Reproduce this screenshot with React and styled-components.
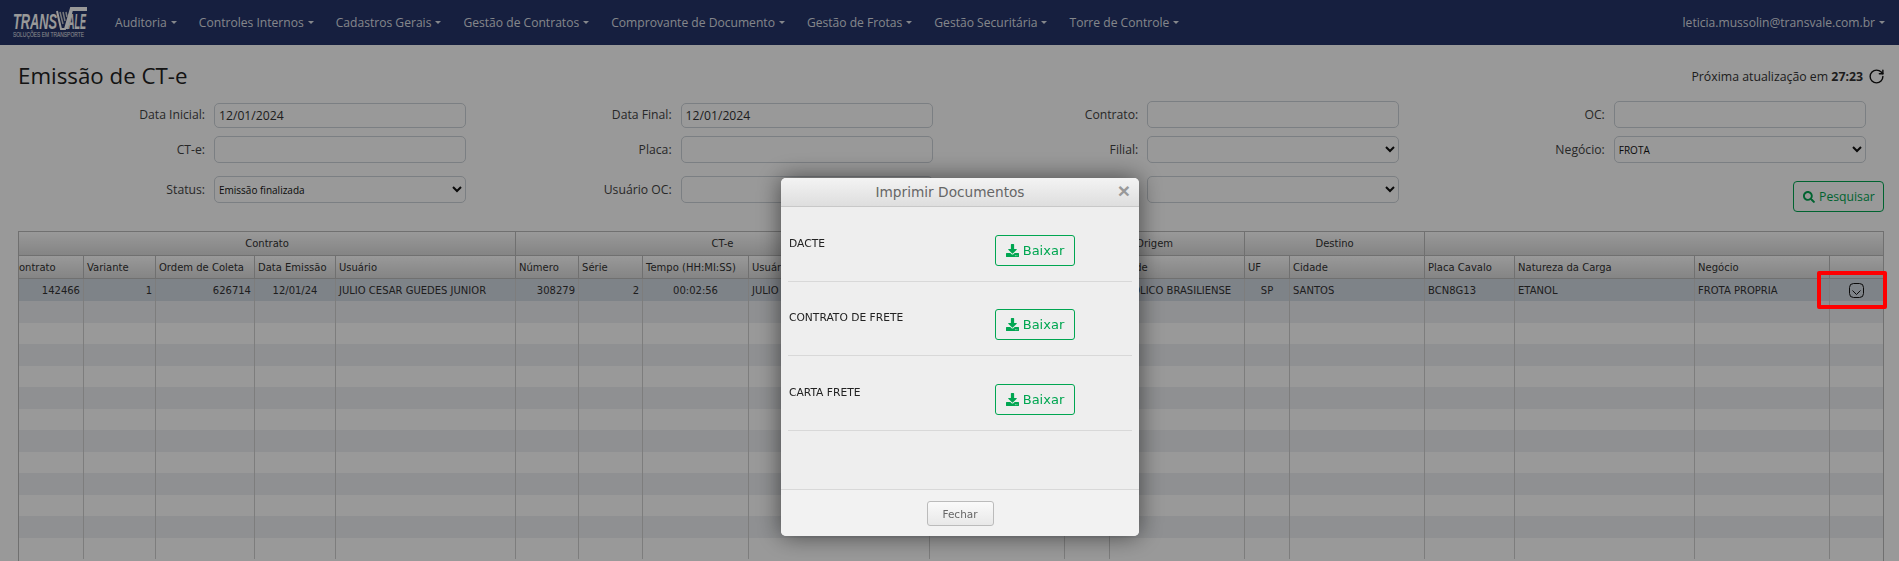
import React from "react";
import styled, { createGlobalStyle } from "styled-components";
import { FaDownload, FaSearch } from "react-icons/fa";
import { RotateCw } from "lucide-react";

const Global = createGlobalStyle`
  html, body { margin: 0; padding: 0; height: 100%; overflow: hidden; background: #fff; }
  body { font-family: "Open Sans", "Liberation Sans", sans-serif; color: #333; }
  * { box-sizing: border-box; }
`;

const Navbar = styled.nav`
  height: 45px;
  background: #253569;
  display: flex;
  align-items: center;
  padding: 0 14px 0 13px;
`;
const LogoBox = styled.div`
  width: 74px;
  height: 32px;
  margin-right: 28px;
  flex: none;
  svg { overflow: visible; display: block; }
`;
const Menu = styled.ul`
  display: flex;
  list-style: none;
  margin: 0;
  padding: 0;
  flex: 1;
`;
const MenuItem = styled.li`
  font-size: 12.1px;
  color: rgba(255, 255, 255, 0.85);
  white-space: nowrap;
  margin-right: ${(p) => p.$gap ?? 22}px;
  display: flex;
  align-items: center;
  &::after {
    content: "";
    margin-left: 4px;
    border-top: 3px solid currentColor;
    border-left: 3px solid transparent;
    border-right: 3px solid transparent;
  }
`;
const UserItem = styled(MenuItem)`
  margin-right: 0;
`;

const Content = styled.main`
  padding: 0 14px 0 18px;
`;
const TitleRow = styled.div`
  display: flex;
  justify-content: space-between;
  align-items: center;
  height: 56px;
`;
const Title = styled.h1`
  margin: 4px 0 0;
  font-size: 22.3px;
  font-weight: 500;
  color: #222;
`;
const Refresh = styled.div`
  display: flex;
  align-items: center;
  gap: 5px;
  font-size: 12.3px;
  color: #333;
  margin-top: 7px;
  b { font-weight: 700; }
`;

const Filters = styled.section`
  display: grid;
  grid-template-columns: repeat(4, 466.6px);
  grid-template-rows: 35px 40px 36px;
  width: 1867px;
`;
const Field = styled.div`
  display: grid;
  grid-template-columns: 187px 252px;
  column-gap: 9px;
  align-items: center;
  height: 27px;
`;
const FieldLabel = styled.label`
  text-align: right;
  font-size: 12.2px;
  color: #444;
`;
const TextInput = styled.input`
  width: 252px;
  height: ${(p) => (p.$short ? 25 : 27)}px;
  margin-top: ${(p) => (p.$short ? 2 : 0)}px;
  border: 1px solid #ced4da;
  border-radius: 5px;
  background: #fff;
  padding: 0 4px;
  font: 12.2px "Open Sans", sans-serif;
  color: #333;
`;
const SelectInput = styled.select`
  width: 252px;
  height: 27px;
  border: 1px solid #ced4da;
  border-radius: 5px;
  background: #fff;
  padding: 0;
  font: 10px "Open Sans", sans-serif;
  color: #111;
`;
const SearchCell = styled.div`
  display: flex;
  justify-content: flex-end;
  padding-top: 5px;
`;
const SearchButton = styled.button`
  width: 91px;
  height: 31px;
  display: inline-flex;
  align-items: center;
  justify-content: center;
  gap: 4px;
  border: 1px solid #00a651;
  border-radius: 4px;
  background: #fff;
  color: #00a651;
  font: 12.2px "Open Sans", sans-serif;
  padding: 0;
`;

const TableWrap = styled.div`
  margin-top: 19px;
  width: 1866px;
  height: 340px;
  overflow: hidden;
  border: 1px solid #bbb;
`;
const Table = styled.table`
  table-layout: fixed;
  width: 1865px;
  border-collapse: separate;
  border-spacing: 0;
  font: 10px "DejaVu Sans", Verdana, sans-serif;
  color: #333;
`;
const GroupCell = styled.th`
  height: 24px;
  font-weight: 400;
  text-align: center;
  padding: 0;
  background: linear-gradient(#fff, #ddd);
  border-right: 1px solid #bbb;
  border-bottom: 1px solid #bbb;
`;
const HeadCell = styled.th`
  height: 23px;
  font-weight: 400;
  text-align: left;
  padding: 0 3px;
  white-space: nowrap;
  overflow: hidden;
  background: linear-gradient(#fff, #ddd);
  border-right: 1px solid #bbb;
  border-bottom: 1px solid #bbb;
  span { display: block; margin-left: ${(p) => (p.$clip ? -10 : 0)}px; }
`;
const BodyRow = styled.tr`
  height: ${(p) => (p.$selected ? 22 : 21.5)}px;
  background: ${(p) => (p.$selected ? "#d3dae3" : p.$alt ? "#eef0f3" : "#fff")};
`;
const BodyCell = styled.td`
  padding: 0 3px;
  text-align: ${(p) => p.$align || "left"};
  white-space: nowrap;
  overflow: hidden;
  border-right: 1px solid #d0d0d0;
`;
const ActionIcon = styled.svg`
  display: block;
  margin: 0 0 0 16px;
`;

const Backdrop = styled.div`
  position: fixed;
  inset: 0;
  background: rgba(0, 0, 0, 0.4);
`;
const Modal = styled.div`
  position: fixed;
  left: 781px;
  top: 178px;
  width: 358px;
  height: 358px;
  border-radius: 5px;
  background: #eee;
  box-shadow: 0 0 24px rgba(0, 0, 0, 0.55);
  display: flex;
  flex-direction: column;
  font-family: "DejaVu Sans", Verdana, sans-serif;
  overflow: hidden;
`;
const ModalHeader = styled.header`
  height: 29px;
  flex: none;
  position: relative;
  display: flex;
  align-items: center;
  justify-content: center;
  padding-right: 20px;
  background: linear-gradient(#f3f3f3, #dedede);
  border-bottom: 1px solid #c8c8c8;
  color: #666;
  font-size: 13.7px;
`;
const CloseMark = styled.span`
  position: absolute;
  right: 9px;
  top: 0;
  color: #999;
  font: 700 21px/26px "Liberation Sans", sans-serif;
`;
const ModalBody = styled.div`
  flex: 1;
  padding: 0 7px;
`;
const DocRow = styled.div`
  height: ${(p) => (p.$top === 27 ? 74 : 75)}px;
  padding-top: ${(p) => p.$top}px;
  padding-left: 1px;
  display: grid;
  grid-template-columns: 206px 80px;
  border-bottom: 1px solid #d8d8d8;
`;
const DocName = styled.span`
  font-size: 10.7px;
  color: #222;
  line-height: 18px;
`;
const DownloadButton = styled.button`
  width: 80px;
  height: 31px;
  display: inline-flex;
  align-items: center;
  justify-content: center;
  gap: 4px;
  border: 1px solid #00a651;
  border-radius: 3px;
  background: #eee;
  color: #00a651;
  font: 13px "DejaVu Sans", Verdana, sans-serif;
  padding: 0;
`;
const ModalFooter = styled.footer`
  height: 47px;
  flex: none;
  background: #f2f2f2;
  border-top: 1px solid #d8d8d8;
  display: flex;
  justify-content: center;
  padding-top: 11px;
`;
const CloseButton = styled.button`
  width: 67px;
  height: 25px;
  border: 1px solid #bbb;
  border-radius: 3px;
  background: linear-gradient(#fafafa, #e8e8e8);
  color: #666;
  font: 10.5px "DejaVu Sans", Verdana, sans-serif;
  padding: 0;
`;
const Annotation = styled.div`
  position: fixed;
  left: 1817px;
  top: 271px;
  width: 70px;
  height: 38px;
  border: 4px solid #f00;
  border-radius: 2px;
`;

const Logo = () => (
  <svg width="74" height="32" viewBox="0 0 74 32">
    <text x="0" y="22" fontFamily="Liberation Sans" fontWeight="700" fontStyle="italic" fontSize="22" fill="#fff" textLength="44" lengthAdjust="spacingAndGlyphs">TRANS</text>
    <path d="M44 4 L48 22 L52 22 L58 1 L73 1 L73 3 L59 3 L54 22" fill="none" stroke="#fff" strokeWidth="2" />
    <path d="M47 5 L50 17 M50 5 L52 14 M53 5 L54 10" stroke="#c8c8cc" strokeWidth="1.5" />
    <text x="55" y="22" fontFamily="Liberation Sans" fontWeight="700" fontStyle="italic" fontSize="22" fill="#fff" textLength="18" lengthAdjust="spacingAndGlyphs">ALE</text>
    <text x="0" y="30" fontFamily="Liberation Sans" fontSize="6.5" fill="#e8e8ee" textLength="71" lengthAdjust="spacingAndGlyphs">SOLUÇÕES EM TRANSPORTE</text>
  </svg>
);

const menu = [
  ["Auditoria", 22],
  ["Controles Internos", 22],
  ["Cadastros Gerais", 22],
  ["Gestão de Contratos", 22],
  ["Comprovante de Documento", 22],
  ["Gestão de Frotas", 22],
  ["Gestão Securitária", 22],
  ["Torre de Controle", 0],
];

const widths = [65, 72, 99, 81, 180, 63, 64, 106, 181, 135, 45, 135, 45, 135, 90, 180, 135, 54];
const groups = [
  ["Contrato", 5],
  ["CT-e", 4],
  ["", 1],
  ["Origem", 2],
  ["Destino", 2],
  ["", 4],
];
const heads = ["Contrato", "Variante", "Ordem de Coleta", "Data Emissão", "Usuário", "Número", "Série", "Tempo (HH:MI:SS)", "Usuário", "", "UF", "Cidade", "UF", "Cidade", "Placa Cavalo", "Natureza da Carga", "Negócio", ""];
const row = [
  ["142466", "right"], ["1", "right"], ["626714", "right"], ["12/01/24", "center"],
  ["JULIO CESAR GUEDES JUNIOR"], ["308279", "right"], ["2", "right"], ["00:02:56", "center"],
  ["JULIO CESAR GUEDES JUNIOR"], [""], ["DF", "center"], ["CATOLICO BRASILIENSE"],
  ["SP", "center"], ["SANTOS"], ["BCN8G13"], ["ETANOL"], ["FROTA PROPRIA"],
];
const docs = [["DACTE", 28], ["CONTRATO DE FRETE", 27], ["CARTA FRETE", 28]];

export default function App() {
  return (
    <>
      <Global />
      <Navbar>
        <LogoBox><Logo /></LogoBox>
        <Menu>
          {menu.map(([t, g]) => <MenuItem key={t} $gap={g}>{t}</MenuItem>)}
        </Menu>
        <UserItem as="div">leticia.mussolin@transvale.com.br</UserItem>
      </Navbar>
      <Content>
        <TitleRow>
          <Title>Emissão de CT-e</Title>
          <Refresh>
            <span>Próxima atualização em <b>27:23</b></span>
            <RotateCw size={17} strokeWidth={2} color="#111" />
          </Refresh>
        </TitleRow>
        <Filters>
          <Field><FieldLabel>Data Inicial:</FieldLabel><TextInput $short defaultValue="12/01/2024" /></Field>
          <Field><FieldLabel>Data Final:</FieldLabel><TextInput $short defaultValue="12/01/2024" /></Field>
          <Field><FieldLabel>Contrato:</FieldLabel><TextInput /></Field>
          <Field><FieldLabel>OC:</FieldLabel><TextInput /></Field>
          <Field><FieldLabel>CT-e:</FieldLabel><TextInput /></Field>
          <Field><FieldLabel>Placa:</FieldLabel><TextInput /></Field>
          <Field><FieldLabel>Filial:</FieldLabel><SelectInput><option></option></SelectInput></Field>
          <Field><FieldLabel>Negócio:</FieldLabel><SelectInput defaultValue="FROTA"><option>FROTA</option></SelectInput></Field>
          <Field><FieldLabel>Status:</FieldLabel><SelectInput defaultValue="Emissão finalizada"><option>Emissão finalizada</option></SelectInput></Field>
          <Field><FieldLabel>Usuário OC:</FieldLabel><TextInput /></Field>
          <Field><FieldLabel>Tipo:</FieldLabel><SelectInput><option></option></SelectInput></Field>
          <SearchCell><SearchButton><FaSearch size={12} />Pesquisar</SearchButton></SearchCell>
        </Filters>
        <TableWrap>
          <Table>
            <colgroup>{widths.map((w, i) => <col key={i} width={w} />)}</colgroup>
            <thead>
              <tr>{groups.map(([t, s], i) => <GroupCell key={i} colSpan={s}>{t}</GroupCell>)}</tr>
              <tr>{heads.map((t, i) => <HeadCell key={i} $clip={i === 0}><span>{t}</span></HeadCell>)}</tr>
            </thead>
            <tbody>
              <BodyRow $selected>
                {row.map(([t, a], i) => <BodyCell key={i} $align={a}>{t}</BodyCell>)}
                <BodyCell>
                  <ActionIcon width="15" height="15" viewBox="0 0 15 15" fill="none" stroke="#111">
                    <rect x="0.5" y="0.5" width="14" height="14" rx="4" />
                    <path d="M3.5 7.5 L7.5 11.5 L11.5 7.5" />
                  </ActionIcon>
                </BodyCell>
              </BodyRow>
              {Array.from({ length: 12 }, (_, r) => (
                <BodyRow key={r} $alt={r % 2 === 0}>
                  {widths.map((_, i) => <BodyCell key={i} />)}
                </BodyRow>
              ))}
            </tbody>
          </Table>
        </TableWrap>
      </Content>
      <Backdrop />
      <Modal>
        <ModalHeader>Imprimir Documentos<CloseMark>×</CloseMark></ModalHeader>
        <ModalBody>
          {docs.map(([d, top]) => (
            <DocRow key={d} $top={top}>
              <DocName>{d}</DocName>
              <DownloadButton><FaDownload size={13} />Baixar</DownloadButton>
            </DocRow>
          ))}
        </ModalBody>
        <ModalFooter><CloseButton>Fechar</CloseButton></ModalFooter>
      </Modal>
      <Annotation />
    </>
  );
}
